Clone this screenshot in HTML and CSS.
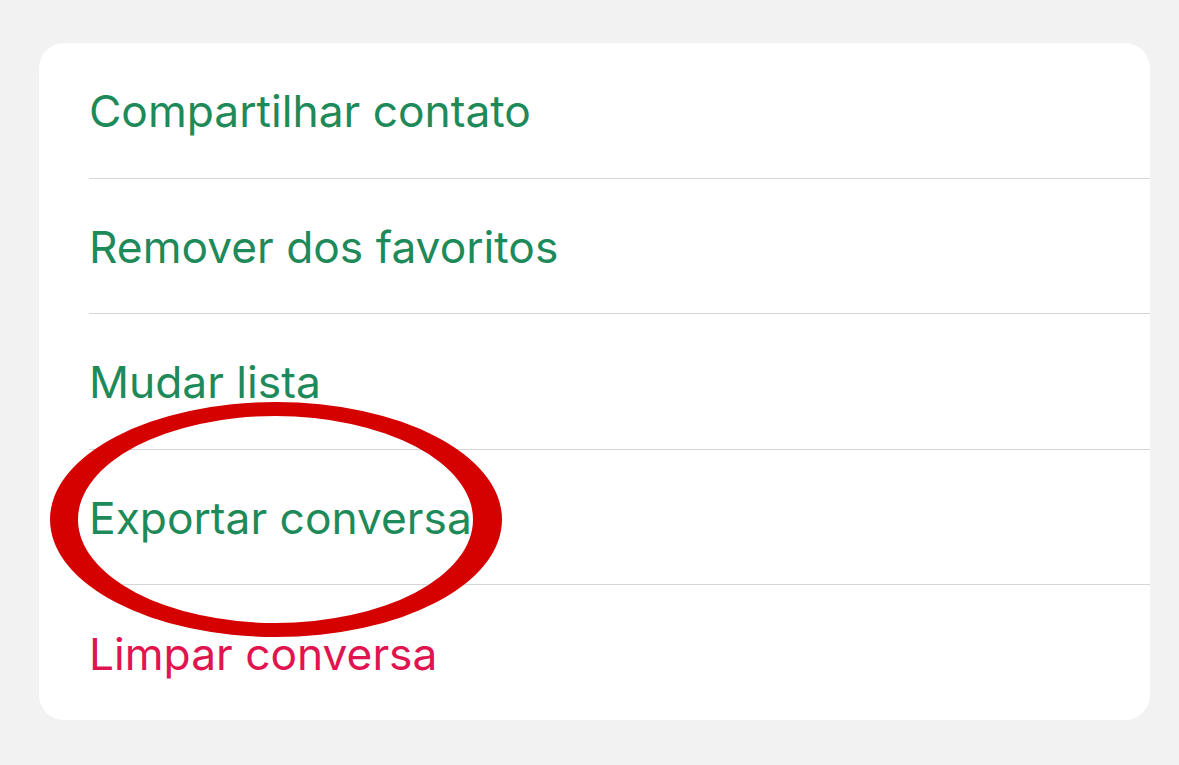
FILE: index.html
```html
<!DOCTYPE html>
<html lang="pt">
<head>
<meta charset="utf-8">
<link rel="stylesheet" href="styles.css">
</head>
<body>
<div class="page">
  <div class="card">
    <div class="row"><span class="label">Compartilhar contato</span></div>
    <div class="row"><span class="label">Remover dos favoritos</span></div>
    <div class="row"><span class="label">Mudar lista</span></div>
    <div class="row"><span class="label">Exportar conversa</span></div>
    <div class="row last"><span class="label danger">Limpar conversa</span></div>
  </div>
  <svg class="mark" width="1179" height="765" viewBox="0 0 1179 765">
    <path fill="#d50000" fill-rule="evenodd" d="M50 519.5 A226 117.5 0 1 0 502 519.5 A226 117.5 0 1 0 50 519.5 Z M78 519.5 A197.5 103.5 0 1 1 473 519.5 A197.5 103.5 0 1 1 78 519.5 Z"/>
  </svg>
</div>
</body>
</html>
```
FILE: styles.css
```css
html, body {
  margin: 0;
  padding: 0;
  background: #f2f2f2;
}
.page {
  position: relative;
  width: 1179px;
  height: 765px;
  padding: 43px 29px 0 39px;
  box-sizing: border-box;
  font-family: Inter, "Liberation Sans", Arial, sans-serif;
}
.card {
  background: #ffffff;
  border-radius: 25px;
  height: 677px;
  padding-left: 50px;
  display: flex;
  flex-direction: column;
  overflow: hidden;
}
.row {
  flex: 1;
  display: flex;
  align-items: center;
  border-bottom: 1.5px solid #d6d6d8;
  padding-top: 2px;
  box-sizing: border-box;
}
.row.last {
  border-bottom: none;
}
.label {
  font-size: 44.3px;
  font-weight: 400;
  color: #1e8a5a;
  letter-spacing: 0;
}
.label.danger {
  color: #e0144f;
}
.mark {
  position: absolute;
  left: 0;
  top: 0;
  pointer-events: none;
}
```
